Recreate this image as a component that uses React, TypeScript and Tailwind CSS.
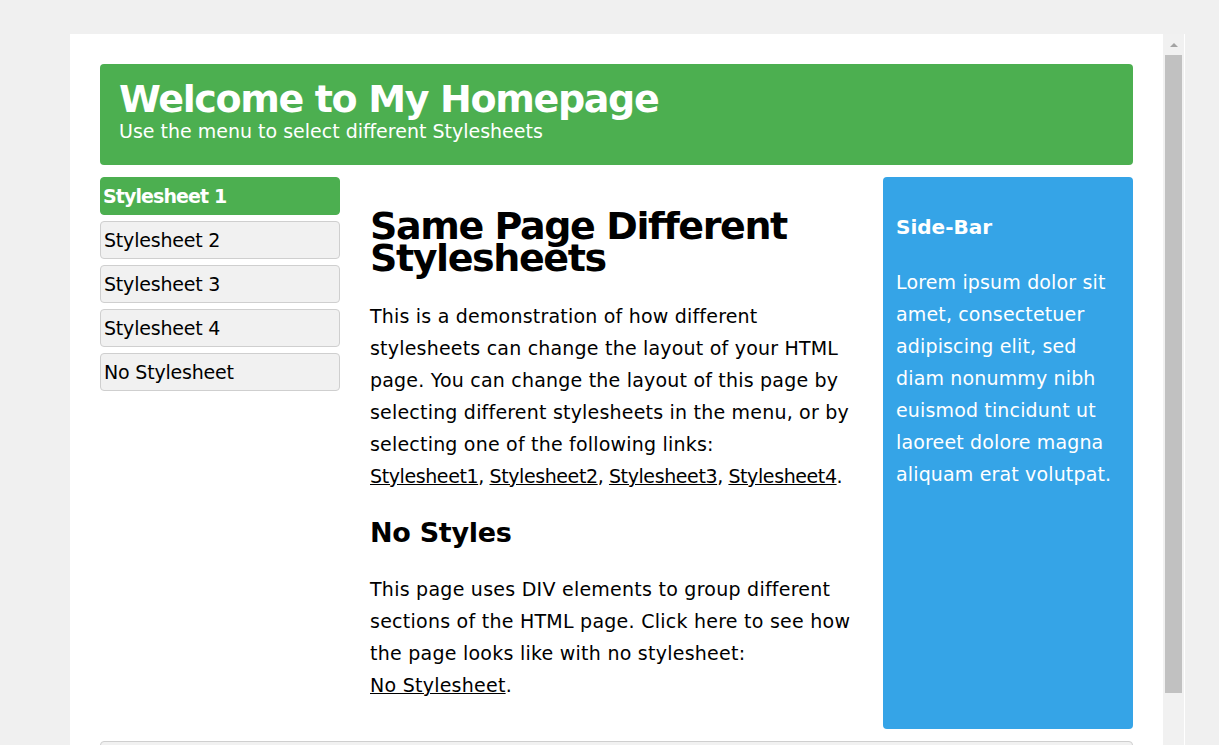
import React from "react";

const font = { fontFamily: '"DejaVu Sans", Verdana, sans-serif' };

export default function App() {
  const items = ["Stylesheet 1", "Stylesheet 2", "Stylesheet 3", "Stylesheet 4", "No Stylesheet"];
  return (
    <div className="w-[1219px] h-[745px] bg-[#f0f0f0] overflow-hidden flex pt-[34px] pl-[70px]" style={font}>
      <div className="w-[1093px] h-[711px] bg-white px-[30px] pt-[30px] overflow-hidden shrink-0">
        <div className="bg-[#4caf50] rounded-[4px] h-[101px] px-[19px] pt-[13px] text-white">
          <h1 className="text-[38px] font-bold leading-[44px] tracking-[-1.35px]">Welcome to My Homepage</h1>
          <p className="text-[19px] leading-[22px] -mt-[1px]">Use the menu to select different Stylesheets</p>
        </div>
        <div className="flex mt-[12px]">
          <div className="w-[240px] shrink-0 flex flex-col gap-[6px]">
            {items.map((t, i) => (
              <div
                key={t}
                className={
                  i === 0
                    ? "h-[38px] rounded-[4px] border border-[#4caf50] bg-[#4caf50] text-white font-bold text-[19px] leading-[37px] px-[2px] tracking-[-0.9px]"
                    : "h-[38px] rounded-[4px] border border-[#cfcfcf] bg-[#f1f1f1] text-black text-[19px] leading-[37px] px-[3px] tracking-[-0.2px]"
                }
              >
                {t}
              </div>
            ))}
          </div>
          <div className="ml-[30px] shrink-0 text-black">
            <h1 className="text-[38px] font-bold leading-[32px] mt-[33px] tracking-[-1.4px]">
              Same Page Different
              <br />
              Stylesheets
            </h1>
            <p className="text-[19px] leading-[32px] mt-[26px] tracking-[0.2px] whitespace-nowrap">
              This is a demonstration of how different
              <br />
              stylesheets can change the layout of your HTML
              <br />
              page. You can change the layout of this page by
              <br />
              selecting different stylesheets in the menu, or by
              <br />
              selecting one of the following links:
              <br />
              <span className="tracking-[-0.4px]">
                <a className="underline">Stylesheet1</a>, <a className="underline">Stylesheet2</a>,{" "}
                <a className="underline">Stylesheet3</a>, <a className="underline">Stylesheet4</a>.
              </span>
            </p>
            <h2 className="text-[27px] font-bold leading-[32px] mt-[25px] tracking-[-0.3px]">No Styles</h2>
            <p className="text-[19px] leading-[32px] mt-[24px] tracking-[0.25px] whitespace-nowrap">
              This page uses DIV elements to group different
              <br />
              sections of the HTML page. Click here to see how
              <br />
              the page looks like with no stylesheet:
              <br />
              <a className="underline">No Stylesheet</a>.
            </p>
          </div>
          <div className="w-[250px] ml-auto shrink-0 h-[552px] bg-[#35a4e7] rounded-[4px] text-white px-[13px] pt-[36px]">
            <h3 className="text-[20px] font-bold leading-[28px]">Side-Bar</h3>
            <p className="text-[19px] leading-[32px] mt-[25px] tracking-[0.15px]">
              Lorem ipsum dolor sit
              <br />
              amet, consectetuer
              <br />
              adipiscing elit, sed
              <br />
              diam nonummy nibh
              <br />
              euismod tincidunt ut
              <br />
              laoreet dolore magna
              <br />
              aliquam erat volutpat.
            </p>
          </div>
        </div>
        <div className="mt-[12px] h-[40px] rounded-[4px] border border-[#cfcfcf] bg-[#f1f1f1]"></div>
      </div>
      <div className="w-[21px] h-[711px] bg-[#f1f1f1] shrink-0 relative">
        <div className="absolute left-[7px] top-[9px] w-0 h-0 border-l-[4px] border-r-[4px] border-b-[4px] border-l-transparent border-r-transparent border-b-[#a3a3a3]"></div>
        <div className="absolute left-[2px] top-[21px] w-[17px] h-[638px] bg-[#c1c1c1]"></div>
      </div>
      <div className="w-[1px] h-[711px] bg-white shrink-0"></div>
    </div>
  );
}
